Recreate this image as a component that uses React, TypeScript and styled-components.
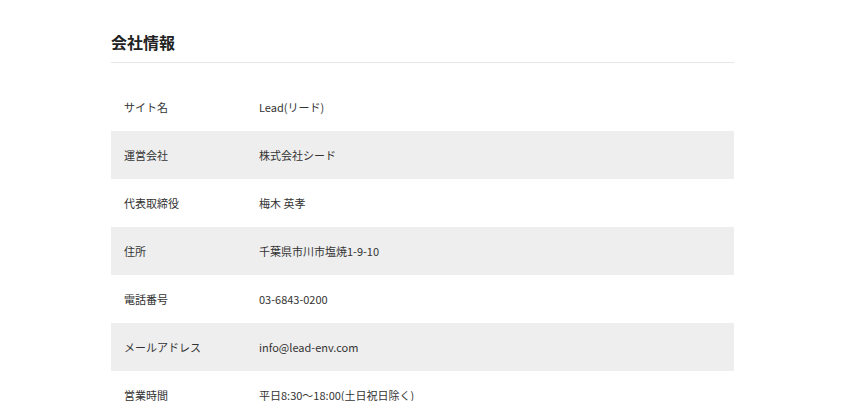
import React from "react";
import styled, { createGlobalStyle } from "styled-components";

const Global = createGlobalStyle`
  html, body { margin: 0; padding: 0; background: #fff; }
  body { font-family: "Noto Sans CJK JP", "Noto Sans", sans-serif; color: #333; }
`;

const Page = styled.div`
  padding: 30px 0 0 111px;
`;

const Section = styled.section`
  width: 623px;
`;

const Heading = styled.h2`
  margin: 0;
  font-size: 16px;
  line-height: 25px;
  font-weight: 700;
  color: #222;
  padding-bottom: 7px;
  border-bottom: 1px solid #e6e6e6;
`;

const Table = styled.dl`
  margin: 20px 0 0;
  display: flex;
  flex-direction: column;
`;

const Row = styled.div<{ $shaded: boolean }>`
  display: grid;
  grid-template-columns: 148px 1fr;
  align-items: center;
  height: 48px;
  background: ${(p) => (p.$shaded ? "#eeeeee" : "transparent")};
`;

const Label = styled.dt`
  padding-left: 13px;
  font-size: 11px;
  color: #333;
`;

const Value = styled.dd`
  margin: 0;
  font-size: 11px;
  color: #333;
`;

const rows: [string, string][] = [
  ["サイト名", "Lead(リード)"],
  ["運営会社", "株式会社シード"],
  ["代表取締役", "梅木 英孝"],
  ["住所", "千葉県市川市塩焼1-9-10"],
  ["電話番号", "03-6843-0200"],
  ["メールアドレス", "info@lead-env.com"],
  ["営業時間", "平日8:30〜18:00(土日祝日除く)"],
];

export default function App() {
  return (
    <>
      <Global />
      <Page>
        <Section>
          <Heading>会社情報</Heading>
          <Table>
            {rows.map(([k, v], i) => (
              <Row key={k} $shaded={i % 2 === 1}>
                <Label>{k}</Label>
                <Value>{v}</Value>
              </Row>
            ))}
          </Table>
        </Section>
      </Page>
    </>
  );
}
